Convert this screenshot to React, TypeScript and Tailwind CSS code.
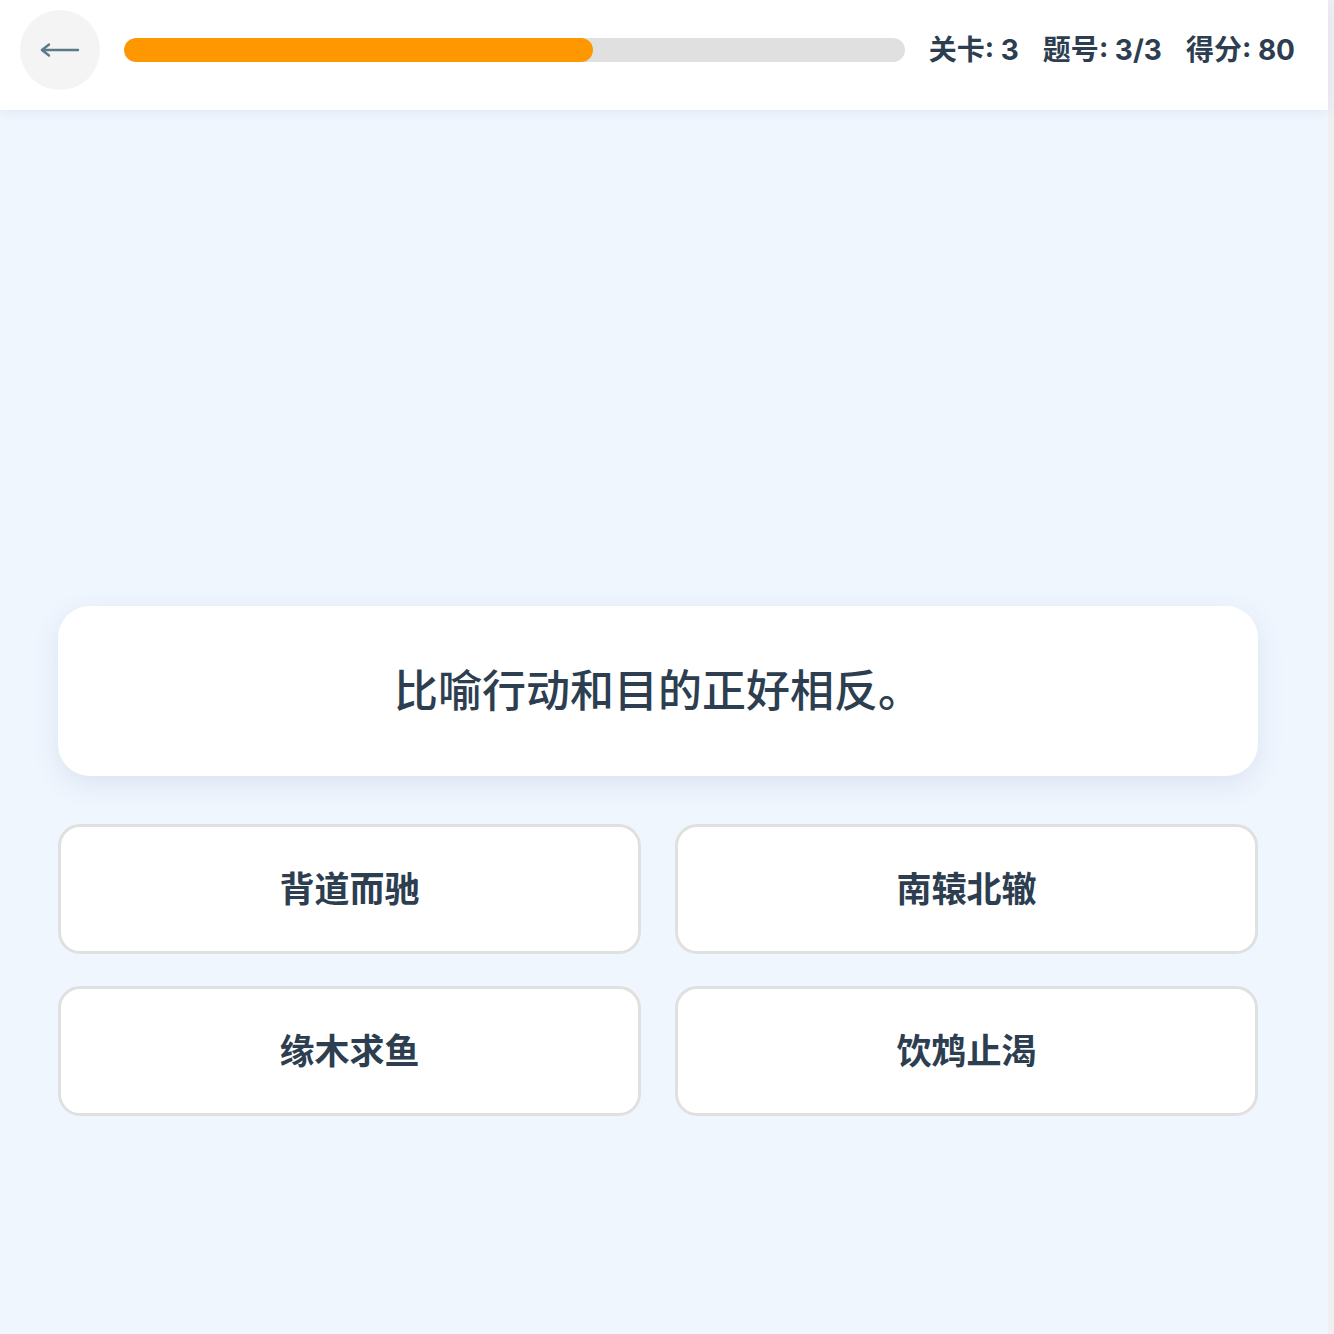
import React from 'react'

const OPTIONS = ['背道而驰', '南辕北辙', '缘木求鱼', '饮鸩止渴']

const STATS = [
  { label: '关卡', value: '3' },
  { label: '题号', value: '3/3' },
  { label: '得分', value: '80' },
]

export default function App() {
  const progress = 60

  return (
    <div
      className="flex h-[1334px] w-[1334px] overflow-hidden bg-[#f0f0f3]"
      style={{ fontFamily: 'Inter, "Noto Sans CJK SC", sans-serif' }}
    >
      <div className="flex h-full w-[1328px] flex-col bg-[#f0f6fe]">
        {/* Top bar */}
        <header className="relative z-10 flex h-[110px] shrink-0 items-center bg-white pb-[10px] pl-5 pr-[33px] shadow-[0_2px_12px_rgba(30,60,120,0.08)]">
          <button
            type="button"
            className="flex h-20 w-20 shrink-0 items-center justify-center rounded-full bg-[#f4f4f5]"
          >
            <svg width="40" height="20" viewBox="0 0 40 20" fill="none" stroke="#5b7a89" strokeWidth="2.4" strokeLinecap="round" strokeLinejoin="round">
              <path d="M2 10h36" />
              <path d="M9 4.5L2 10l7 5.5" />
            </svg>
          </button>

          <div className="ml-6 h-6 w-[781px] shrink-0 overflow-hidden rounded-full bg-[#e0e0e0]">
            <div className="h-full rounded-full bg-[#ff9800]" style={{ width: `${progress}%` }} />
          </div>

          <div className="ml-auto flex items-center gap-6 text-[28px] font-bold text-[#2c3e50]">
            {STATS.map(s => (
              <span key={s.label}>
                {s.label}: {s.value}
              </span>
            ))}
          </div>
        </header>

        {/* Question + answers */}
        <main className="flex flex-col pl-[58px] pt-[496px]">
          <div className="flex h-[170px] w-[1200px] items-center justify-center rounded-[32px] bg-white shadow-[0_8px_28px_rgba(40,70,130,0.10)]">
            <p className="text-[44px] font-medium text-[#2c3e50]">比喻行动和目的正好相反。</p>
          </div>

          <div className="mt-12 grid w-[1200px] grid-cols-2 gap-x-[34px] gap-y-8">
            {OPTIONS.map(opt => (
              <button
                key={opt}
                type="button"
                className="flex h-[130px] items-center justify-center rounded-[22px] border-[3px] border-[#e0e0e0] bg-white text-[35px] font-bold text-[#2c3e50]"
              >
                {opt}
              </button>
            ))}
          </div>
        </main>
      </div>
    </div>
  )
}
